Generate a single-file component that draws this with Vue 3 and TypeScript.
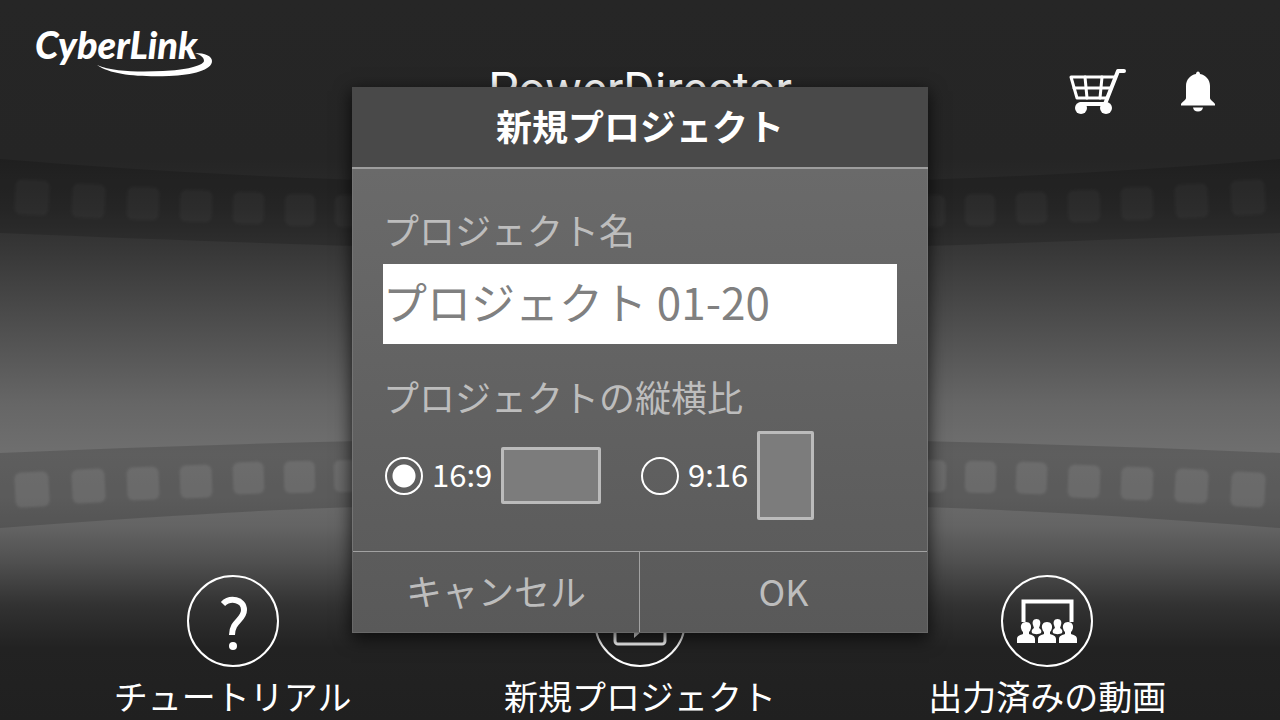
<script setup lang="ts">
import { ref } from 'vue'

type Ratio = '16:9' | '9:16'

interface Hole {
  x: number
  y: number
  w: number
  h: number
  skew: number
}

const projectName = ref('プロジェクト 01-20')
const ratio = ref<Ratio>('16:9')
const ratios: { value: Ratio; shape: string }[] = [
  { value: '16:9', shape: 'wide' },
  { value: '9:16', shape: 'tall' },
]

const holes: Hole[] = [
  { x: 15, y: 180, w: 34, h: 35, skew: 3 },
  { x: 72, y: 184, w: 33, h: 34, skew: 3 },
  { x: 127, y: 187, w: 32, h: 33, skew: 2 },
  { x: 180, y: 190, w: 32, h: 32, skew: 2 },
  { x: 233, y: 192, w: 31, h: 32, skew: 2 },
  { x: 285, y: 194, w: 30, h: 32, skew: 1 },
  { x: 335, y: 195, w: 30, h: 32, skew: 1 },
  { x: 15, y: 472, w: 34, h: 35, skew: -3 },
  { x: 72, y: 469, w: 33, h: 34, skew: -3 },
  { x: 127, y: 467, w: 32, h: 33, skew: -2 },
  { x: 180, y: 465, w: 32, h: 33, skew: -2 },
  { x: 233, y: 462, w: 31, h: 32, skew: -2 },
  { x: 284, y: 461, w: 31, h: 32, skew: -1 },
  { x: 334, y: 460, w: 30, h: 32, skew: -1 },
]

function spin(h: Hole): string {
  return `rotate(${h.skew} ${h.x + h.w / 2} ${h.y + h.h / 2})`
}
</script>

<template>
  <div class="page">
    <svg class="film" viewBox="0 0 1280 720" preserveAspectRatio="none" aria-hidden="true">
      <defs>
        <g id="film-half">
          <path d="M0 159 Q180 174 360 180 T640 184 V250 Q500 250 360 246 T0 233Z" fill="#000" fill-opacity=".15" />
          <path d="M0 453 Q180 445 360 441 T640 438 V502 Q500 503 360 507 T0 528Z" fill="#000" fill-opacity=".15" />
          <rect
            v-for="h in holes"
            :key="`${h.x}-${h.y}`"
            class="hole"
            :x="h.x"
            :y="h.y"
            :width="h.w"
            :height="h.h"
            :transform="spin(h)"
            rx="6"
            fill="#fff"
            :fill-opacity="h.y > 400 ? 0.09 : 0.03"
          />
        </g>
      </defs>
      <use href="#film-half" />
      <use href="#film-half" transform="translate(1280 0) scale(-1 1)" />
    </svg>

    <header class="top">
      <a class="logo" href="#" aria-label="CyberLink">
        <span class="logo-text">CyberLink</span>
        <svg class="swoosh" viewBox="0 0 116 26" width="116" height="26" aria-hidden="true">
          <path d="M0 13 C16 20 44 20 66 19 C88 18 106 14 107 9 C107 5 103 3 98 1 C108 1 115 4 115 9 C115 18 96 23 72 24 C42 25 14 23 0 13Z" fill="#fff" />
        </svg>
      </a>
      <h1 class="title">PowerDirector</h1>
      <div class="tools">
        <button type="button" class="tool" aria-label="ショップ">
          <svg viewBox="0 0 58 47" width="58" height="47">
            <g fill="none" stroke="#fff" stroke-width="3" stroke-linejoin="round" stroke-linecap="round">
              <path d="M46 9 H2 L8 30 H38" />
              <path d="M5 20 H42 M16 9 L18 30 M33 9 L31 30" />
              <path d="M55 3 H49 L36 36 H12" stroke-width="4" />
            </g>
            <circle cx="12" cy="40" r="6" fill="#fff" />
            <circle cx="37" cy="40" r="6" fill="#fff" />
          </svg>
        </button>
        <button type="button" class="tool" aria-label="お知らせ">
          <svg viewBox="0 0 34 41" width="34" height="41">
            <path d="M15 3 C15 -0.5 19 -0.5 19 3 C25 4 29 9 29 15 V27 C29 29 33 31 34 33 V34.500 H0 V33 C1 31 5 29 5 27 V15 C5 9 9 4 15 3Z M12 36.500 H22 C21.500 39 20 40.500 17 40.500 C14 40.500 12.500 39 12 36.500Z" fill="#fff" />
          </svg>
        </button>
      </div>
    </header>

    <nav class="menu">
      <button type="button" class="entry">
        <svg viewBox="0 0 92 92" width="92" height="92" aria-hidden="true">
          <circle cx="46" cy="46" r="45" fill="none" stroke="#fff" stroke-width="2" />
          <path d="M36 29 C43 22 57 24 57 35 C57 45 45 46 45 60" fill="none" stroke="#fff" stroke-width="6" />
          <circle cx="46" cy="71" r="4" fill="#fff" />
        </svg>
        <span>チュートリアル</span>
      </button>
      <button type="button" class="entry">
        <svg viewBox="0 0 92 92" width="92" height="92" aria-hidden="true">
          <circle cx="46" cy="46" r="45" fill="none" stroke="#fff" stroke-width="2" />
          <rect x="21" y="26" width="50" height="43" rx="3" fill="none" stroke="#fff" stroke-width="3" />
          <path d="M40 35 L56 49 L40 63Z" fill="#fff" />
        </svg>
        <span>新規プロジェクト</span>
      </button>
      <button type="button" class="entry">
        <svg viewBox="0 0 92 92" width="92" height="92" aria-hidden="true">
          <circle cx="46" cy="46" r="45" fill="none" stroke="#fff" stroke-width="2" />
          <path d="M22.500 47 V26.500 H70.500 V47" fill="none" stroke="#fff" stroke-width="4" />
          <g fill="#fff">
            <path id="viewer" d="M46 47 C50 47 51.500 50 51 53 C50.500 55 50 56 49 57 V59 C52 60 55 61 55 64 V68 H37 V64 C37 61 40 60 43 59 V57 C42 56 41.500 55 41 53 C40.500 50 42 47 46 47Z" />
            <use href="#viewer" x="-21" />
            <use href="#viewer" x="21" />
            <path id="viewer-back" d="M35.500 44 C39 44 40 47 39 50 L38 53 C40 54 41 56 40 58 C38 59.500 33 59.500 31 58 C30 56 31 54 33 53 L32 50 C31 47 32 44 35.500 44Z" />
            <use href="#viewer-back" x="21" />
          </g>
        </svg>
        <span>出力済みの動画</span>
      </button>
    </nav>

    <div class="overlay">
      <form class="dialog" role="dialog" aria-labelledby="dialog-title" @submit.prevent>
        <h2 id="dialog-title" class="dialog-title">新規プロジェクト</h2>
        <div class="dialog-body">
          <label class="caption" for="project-name">プロジェクト名</label>
          <input id="project-name" v-model="projectName" class="name" type="text" autocomplete="off" spellcheck="false" />
          <fieldset class="ratios">
            <legend class="caption">プロジェクトの縦横比</legend>
            <div class="choices">
              <label v-for="r in ratios" :key="r.value" class="choice">
                <input v-model="ratio" class="radio" type="radio" name="ratio" :value="r.value" />
                <span class="ratio-text">{{ r.value }}</span>
                <span class="shape" :class="r.shape"></span>
              </label>
            </div>
          </fieldset>
        </div>
        <div class="actions">
          <button type="button" class="action">キャンセル</button>
          <button type="submit" class="action">OK</button>
        </div>
      </form>
    </div>
  </div>
</template>

<style>
body {
  background: #202020;
}
</style>

<style scoped>
.page {
  position: relative;
  box-sizing: border-box;
  min-height: 100vh;
  display: flex;
  flex-direction: column;
  justify-content: space-between;
  overflow: hidden;
  color: #fff;
  font-family: 'Noto Sans CJK JP', sans-serif;
  background: linear-gradient(
    #262626 0%,
    #252525 22%,
    #2c2c2c 29%,
    #383838 35%,
    #505050 46%,
    #666 56%,
    #6f6f6f 63%,
    #6b6b6b 69%,
    #646464 73%,
    #505050 78%,
    #323232 84%,
    #222 90%,
    #202020 100%
  );
}
.film {
  position: absolute;
  inset: 0;
  width: 100%;
  height: 100%;
}
.hole {
  filter: blur(1px);
}
button {
  padding: 0;
  border: 0;
  background: none;
  color: inherit;
  font: inherit;
  cursor: pointer;
}
.top {
  position: relative;
  display: grid;
  grid-template-columns: 1fr auto 1fr;
  align-items: start;
  padding: 22px 65px 0 35px;
}
.logo {
  display: flex;
  flex-direction: column;
  width: 180px;
  color: #fff;
  text-decoration: none;
}
.logo-text {
  font: italic 900 38px/44px Lato, sans-serif;
}
.swoosh {
  align-self: flex-end;
  margin: -14px 2px 0 0;
}
.title {
  margin: 38px 0 0 30px;
  font: 400 48px/60px Roboto, sans-serif;
}
.tools {
  display: flex;
  align-items: center;
  justify-content: flex-end;
  gap: 54px;
  margin-top: 46px;
}
.tool,
.entry svg,
.tool svg {
  display: block;
}
.menu {
  position: relative;
  display: grid;
  grid-template-columns: repeat(3, 1fr);
  padding: 0 29px;
}
.entry {
  display: flex;
  flex-direction: column;
  align-items: center;
  gap: 4px;
  font-size: 34px;
  line-height: 49px;
  white-space: nowrap;
}
.overlay {
  position: absolute;
  inset: 0;
  display: grid;
  place-items: center;
}
.dialog {
  width: 45%;
  min-width: 560px;
  box-shadow: 0 5px 16px 1px rgba(0, 0, 0, 0.7);
  background: linear-gradient(#6a6a6a 15%, #595959 100%);
}
.dialog-title {
  margin: 0;
  padding-bottom: 4px;
  border-bottom: 2px solid #9d9d9d;
  background: #494949;
  text-align: center;
  font-size: 36px;
  line-height: 76px;
  font-weight: 700;
}
.dialog-body {
  box-sizing: border-box;
  padding: 32px 30px 31px;
  border: solid #747474;
  border-width: 0 1px;
}
.caption {
  display: block;
  padding: 0;
  color: #bdbdbd;
  font-size: 36px;
  line-height: 56px;
}
.name {
  display: block;
  box-sizing: border-box;
  width: 100%;
  height: 80px;
  margin: 7px 0 24px;
  padding: 0 0 6px;
  border: 0;
  border-radius: 0;
  outline: 0;
  background: #fff;
  color: #808080;
  font: inherit;
  font-size: 44px;
}
.ratios {
  min-width: 0;
  margin: 0;
  padding: 0 0 0 2px;
  border: 0;
}
.ratios .caption {
  margin-left: -2px;
}
.choices {
  display: grid;
  grid-template-columns: 1fr 1fr;
  align-items: center;
  margin-top: 7px;
}
.choice {
  display: flex;
  align-items: center;
  gap: 9px;
}
.radio {
  appearance: none;
  box-sizing: border-box;
  width: 38px;
  height: 38px;
  margin: 0;
  border: 2px solid #fff;
  border-radius: 50%;
}
.radio:checked {
  background: radial-gradient(circle, #fff 11px, transparent 12px);
}
.ratio-text {
  padding-bottom: 4px;
  font-size: 31px;
  line-height: 44px;
}
.shape {
  box-sizing: border-box;
  border: 3px solid #bbb;
  border-radius: 2px;
  background: #7c7c7c;
}
.wide {
  width: 100px;
  height: 57px;
}
.tall {
  width: 57px;
  height: 89px;
}
.actions {
  display: grid;
  grid-template-columns: 1fr 1fr;
  border: solid #686868;
  border-width: 0 1px 1px;
}
.action {
  padding-bottom: 4px;
  border-top: 1px solid #a2a2a2;
  color: #bdbdbd;
  font-size: 36px;
  line-height: 76px;
}
.action:first-child {
  border-right: 1px solid #a2a2a2;
}
</style>
